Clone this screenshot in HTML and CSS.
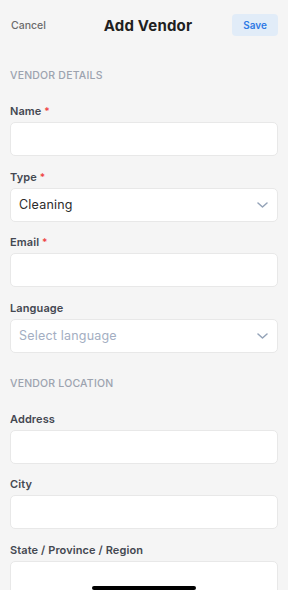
FILE: index.html
```html
<!DOCTYPE html>
<html lang="en">
<head>
    <meta charset="UTF-8">
    <meta name="viewport" content="width=device-width, initial-scale=1.0">
    <title>Add Vendor</title>
    <link rel="stylesheet" href="styles.css">
</head>
<body>
    <div class="screen">
        <div class="header">
            <button class="cancel-button">Cancel</button>
            <h1>Add Vendor</h1>
            <button class="save-button">Save</button>
        </div>

        <div class="form">
            <div class="section">
                <h2>VENDOR DETAILS</h2>
                <div class="field">
                    <label>Name <span class="required">*</span></label>
                    <div class="input"></div>
                </div>
                <div class="field">
                    <label>Type <span class="required">*</span></label>
                    <div class="input select">
                        <span class="value">Cleaning</span>
                        <svg class="chevron" width="11" height="6" viewBox="0 0 11 6"><path d="M1 1l4.5 4L10 1" fill="none" stroke="#94a3b8" stroke-width="1.5" stroke-linecap="round" stroke-linejoin="round"/></svg>
                    </div>
                </div>
                <div class="field">
                    <label>Email <span class="required">*</span></label>
                    <div class="input"></div>
                </div>
                <div class="field">
                    <label>Language</label>
                    <div class="input select">
                        <span class="placeholder">Select language</span>
                        <svg class="chevron" width="11" height="6" viewBox="0 0 11 6"><path d="M1 1l4.5 4L10 1" fill="none" stroke="#94a3b8" stroke-width="1.5" stroke-linecap="round" stroke-linejoin="round"/></svg>
                    </div>
                </div>
            </div>

            <div class="section">
                <h2>VENDOR LOCATION</h2>
                <div class="field">
                    <label>Address</label>
                    <div class="input"></div>
                </div>
                <div class="field">
                    <label>City</label>
                    <div class="input"></div>
                </div>
                <div class="field">
                    <label>State / Province / Region</label>
                    <div class="input"></div>
                </div>
            </div>
        </div>

        <div class="home-indicator"></div>
    </div>
</body>
</html>
```

FILE: styles.css
```css
body {
    margin: 0;
    font-family: Inter, "Open Sans", sans-serif;
    background-color: #f5f5f5;
    overflow: hidden;
}
.screen {
    width: 288px;
    height: 590px;
    overflow: hidden;
}
.header {
    height: 50px;
    padding: 0 10px 0 11px;
    display: flex;
    align-items: center;
    justify-content: space-between;
}
.header h1 {
    margin: 0 0 0 6px;
    font-size: 15px;
    font-weight: 700;
    color: #1f1f1f;
    letter-spacing: 0.2px;
}
.cancel-button {
    background: none;
    border: none;
    padding: 0;
    font-family: inherit;
    font-size: 10.5px;
    font-weight: 500;
    color: #6b6b6b;
    width: 47px;
    text-align: left;
}
.save-button {
    background-color: #e1ecf8;
    border: none;
    border-radius: 4px;
    width: 46px;
    height: 22px;
    font-family: inherit;
    font-size: 10px;
    font-weight: 600;
    color: #2f7ae5;
}
.form {
    padding: 19px 10px 0;
    display: flex;
    flex-direction: column;
    gap: 24px;
}
.section {
    display: flex;
    flex-direction: column;
    gap: 13.4px;
}
.section h2 {
    margin: 0 0 8px;
    font-size: 10.5px;
    line-height: 14px;
    font-weight: 500;
    color: #9ca3af;
    letter-spacing: 0.2px;
}
.field label {
    display: block;
    font-size: 11px;
    line-height: 14px;
    font-weight: 600;
    color: #444851;
    letter-spacing: 0.1px;
    margin-bottom: 4px;
}
.required {
    color: #ef4444;
    font-size: 10px;
}
.input {
    height: 34px;
    box-sizing: border-box;
    background-color: white;
    border: 1px solid #e8e8e8;
    border-radius: 5px;
}
.select {
    display: flex;
    align-items: center;
    justify-content: space-between;
    padding: 0 9px 0 8px;
    font-size: 12.5px;
}
.value {
    color: #2b2b2b;
    letter-spacing: 0.2px;
}
.placeholder {
    color: #a3aec2;
    letter-spacing: 0.2px;
}
.home-indicator {
    position: fixed;
    left: 92px;
    bottom: 0;
    width: 104px;
    height: 4px;
    border-radius: 2px;
    background-color: #000;
}
```
